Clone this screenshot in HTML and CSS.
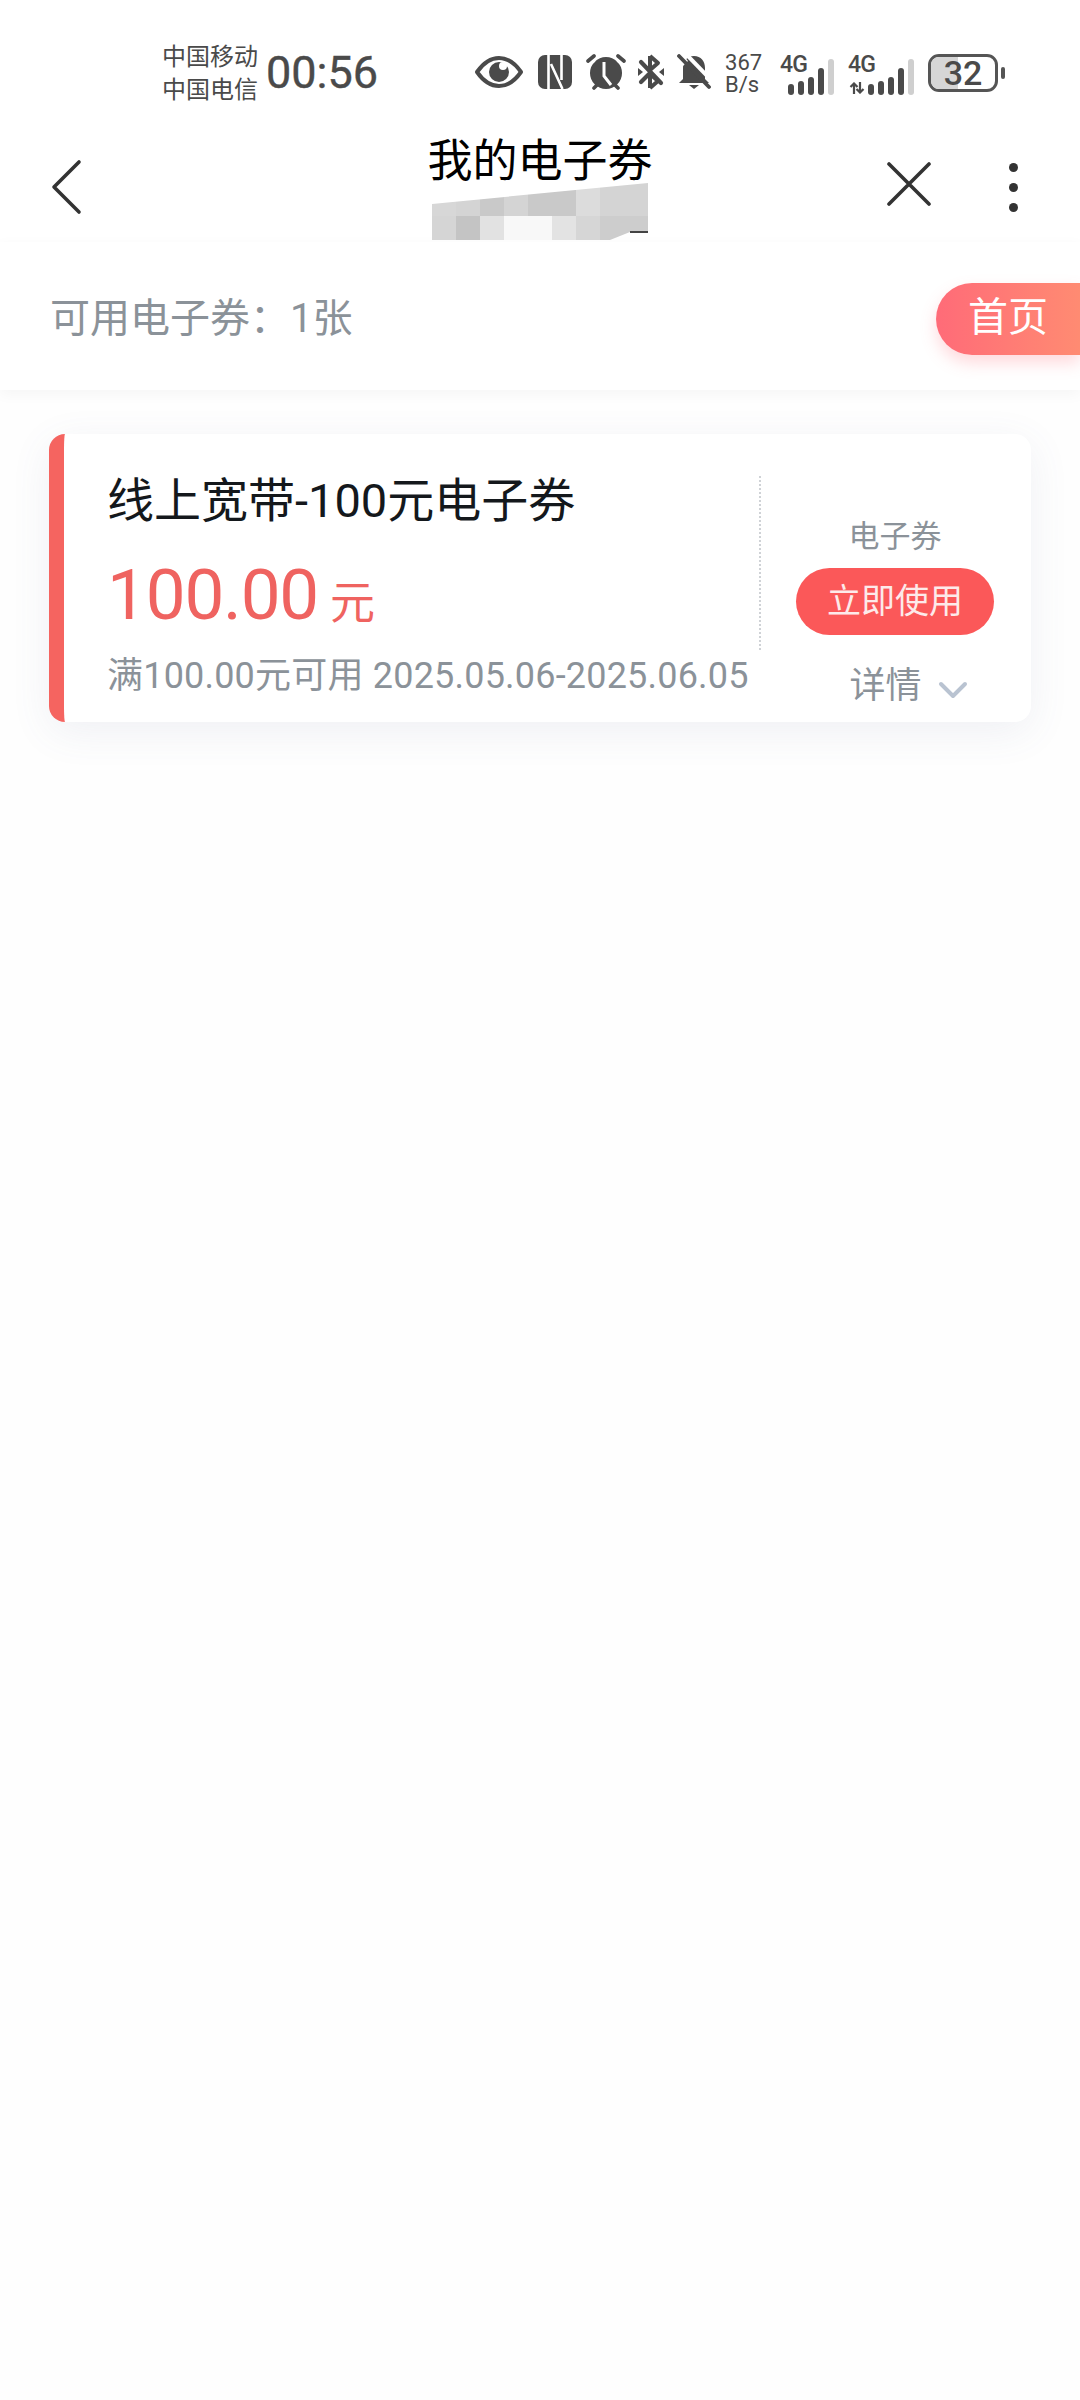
FILE: index.html
```html
<!DOCTYPE html>
<html lang="zh-CN">
<head>
<meta charset="UTF-8">
<title>我的电子券</title>
<link rel="stylesheet" href="styles.css">
</head>
<body>

<div class="statusbar">
    <div class="carriers"><div>中国移动</div><div>中国电信</div></div>
    <div class="clock">00:56</div>
    <div class="status_icons">
        <svg class="ic_eye" viewBox="0 0 48 34"><path d="M2 17C9 7 16 3 24 3s15 4 22 14c-7 10-14 14-22 14S9 27 2 17z" fill="none" stroke="#4a4a4a" stroke-width="4" stroke-linejoin="round"/><circle cx="24" cy="17" r="10" fill="#4a4a4a"/><circle cx="28" cy="11" r="4" fill="#fff"/></svg>
        <svg class="ic_nfc" viewBox="0 0 34 34"><rect width="34" height="34" rx="7" fill="#4a4a4a"/><path d="M10.500 0v34M23.500 0v25M13 9l11.500 25" fill="none" stroke="#fff" stroke-width="2.600"/></svg>
        <svg class="ic_alarm" viewBox="0 0 40 36"><circle cx="20" cy="19" r="16" fill="#4a4a4a"/><path d="M2 7l6-5M38 7l-6-5M8 34l3-3M32 34l-3-3" stroke="#4a4a4a" stroke-width="3.600" stroke-linecap="round"/><path d="M2 13l7-6M38 13l-7-6" stroke="#fff" stroke-width="1.500"/><path d="M18 8v14l7 9" fill="none" stroke="#fff" stroke-width="3"/></svg>
        <svg class="ic_bt" viewBox="0 0 28 36"><path d="M13 2v32M13 2l8 7-8 7M13 34l8-7-8-7" fill="none" stroke="#4a4a4a" stroke-width="4" stroke-linejoin="round"/><path d="M4 8l20 21M4 28l8-8" stroke="#4a4a4a" stroke-width="4.200" stroke-linecap="round"/><path d="M1 14l5 4-5 4zM27 14l-5 4 5 4z" fill="#4a4a4a"/></svg>
        <svg class="ic_bell" viewBox="0 0 34 36"><path d="M17 2c7 0 11 5 11 12v11l4 4H2l4-4V14C6 7 10 2 17 2z" fill="#4a4a4a"/><path d="M12 31h10l-5 4z" fill="#4a4a4a"/><path d="M7-2l31 32" stroke="#fff" stroke-width="4"/><path d="M0 0v8l5 5 6-6-6-7z" fill="#fff"/><path d="M2 2l30 31" stroke="#4a4a4a" stroke-width="3.800" stroke-linecap="round"/></svg>
        <div class="speed"><div>367</div><div>B/s</div></div>
        <div class="signal">
            <span class="net">4G</span>
            <div class="bars">
                <i class="b1"></i><i class="b2"></i><i class="b3"></i><i class="b4"></i><i class="b5"></i>
            </div>
        </div>
        <div class="signal">
            <span class="net">4G</span>
            <svg class="ic_updown" viewBox="0 0 16 12"><path d="M5 12V2M1.500 5L5 1.500 8.500 5M11 0v10M7.500 7l3.500 3.500L14.500 7" fill="none" stroke="#4a4a4a" stroke-width="2.200"/></svg>
            <div class="bars">
                <i class="b1"></i><i class="b2"></i><i class="b3"></i><i class="b4"></i><i class="b5"></i>
            </div>
        </div>
        <div class="battery">
            <div class="battery_body"><div class="battery_fill"></div><span>32</span></div>
            <div class="battery_tip"></div>
        </div>
    </div>
</div>

<div class="navbar">
    <svg class="ic_back" viewBox="0 0 34 56"><path d="M29 3L4 28l25 25" fill="none" stroke="#333" stroke-width="3.600" stroke-linecap="round" stroke-linejoin="round"/></svg>
    <div class="nav_title">
        <div class="title">我的电子券</div>
        <svg class="mosaic" viewBox="0 0 216 57">
            <clipPath id="mosaic_clip"><path d="M0 21L216 0V49H198L178 57H0z"/></clipPath>
            <g clip-path="url(#mosaic_clip)">
                <rect x="0" y="0" width="24" height="33" fill="#d7d7d7"/>
                <rect x="24" y="0" width="24" height="33" fill="#d4d4d4"/>
                <rect x="48" y="0" width="24" height="33" fill="#c9c9c9"/>
                <rect x="72" y="0" width="24" height="33" fill="#d4d4d4"/>
                <rect x="96" y="0" width="48" height="33" fill="#c9c9c9"/>
                <rect x="144" y="0" width="24" height="33" fill="#dcdcdc"/>
                <rect x="168" y="0" width="48" height="33" fill="#d4d4d4"/>
                <rect x="0" y="33" width="24" height="24" fill="#d5d5d5"/>
                <rect x="24" y="33" width="24" height="24" fill="#c4c4c4"/>
                <rect x="48" y="33" width="24" height="24" fill="#e2e2e2"/>
                <rect x="72" y="33" width="48" height="24" fill="#f8f8f8"/>
                <rect x="120" y="33" width="24" height="24" fill="#e3e3e3"/>
                <rect x="144" y="33" width="24" height="24" fill="#d6d6d6"/>
                <rect x="168" y="33" width="48" height="24" fill="#cdcdcd"/>
            </g>
            <rect x="198" y="48" width="18" height="2" fill="#444"/>
        </svg>
    </div>
    <div class="nav_right">
        <svg class="ic_close" viewBox="0 0 44 44"><path d="M2 2l40 40M42 2L2 42" stroke="#333" stroke-width="3.600" stroke-linecap="round"/></svg>
        <div class="dots"><i></i><i></i><i></i></div>
    </div>
</div>

<div class="summary">
    <div class="summary_text">可用电子券：1张</div>
    <div class="home_btn">首页</div>
</div>

<div class="coupon_list">
    <div class="coupon">
        <div class="coupon_main">
            <div class="coupon_name">线上宽带-100元电子券</div>
            <div class="coupon_amount"><span class="num">100.00</span><span class="unit">元</span></div>
            <div class="coupon_meta">满100.00元可用 2025.05.06-2025.06.05</div>
        </div>
        <div class="coupon_side">
            <div class="coupon_type">电子券</div>
            <div class="use_btn">立即使用</div>
            <div class="detail">详情
                <svg class="ic_down" viewBox="0 0 30 18"><path d="M3 3l12 12L27 3" fill="none" stroke="#b9c3d1" stroke-width="4" stroke-linecap="round" stroke-linejoin="round"/></svg>
            </div>
        </div>
    </div>
</div>

</body>
</html>
```
FILE: styles.css
```css
* {
    box-sizing: border-box;
}
body {
    margin: 0;
    width: 1080px;
    height: 2400px;
    overflow: hidden;
    background: #fefefe;
    font-family: Roboto, "Noto Sans CJK SC", sans-serif;
}

.statusbar {
    height: 118px;
    padding: 28px 0 0 162px;
    display: flex;
    align-items: flex-start;
    background: #fff;
    color: #4a4a4a;
}
.carriers {
    width: 104px;
    font-size: 24px;
    line-height: 33px;
    margin-top: 13px;
}
.clock {
    font-size: 45px;
    line-height: 58px;
    margin-top: 16px;
    -webkit-text-stroke: 0.4px #4a4a4a;
}
.status_icons {
    display: flex;
    align-items: center;
    margin: 22px 0 0 97px;
    height: 44px;
}
.status_icons svg {
    display: block;
}
.ic_eye { width: 48px; height: 34px; margin-right: 15px; }
.ic_nfc { width: 34px; height: 34px; margin-right: 14px; }
.ic_alarm { width: 40px; height: 36px; margin-right: 11px; }
.ic_bt { width: 28px; height: 36px; margin-right: 12px; }
.ic_bell { width: 34px; height: 36px; margin-right: 14px; }
.speed {
    width: 40px;
    font-size: 22px;
    line-height: 22px;
    padding-top: 3px;
    margin-right: 15px;
}
.signal {
    position: relative;
    height: 40px;
    display: flex;
    align-items: flex-end;
    justify-content: flex-end;
    margin-right: 14px;
    width: 54px;
    top: 3px;
}
.signal + .signal {
    width: 66px;
}
.net {
    position: absolute;
    left: 0;
    top: -2px;
    font-size: 23px;
    line-height: 24px;
    font-weight: 500;
    letter-spacing: -1px;
}
.status_icons .ic_updown {
    position: absolute;
    left: 1px;
    bottom: 1px;
    width: 16px;
    height: 12px;
}
.bars {
    display: flex;
    align-items: flex-end;
    gap: 4px;
}
.bars i {
    display: block;
    width: 6px;
    border-radius: 3px;
    background: #4a4a4a;
}
.bars .b1 { height: 11px; }
.bars .b2 { height: 14px; }
.bars .b3 { height: 18px; }
.bars .b4 { height: 27px; }
.bars .b5 { height: 36px; background: #cfcfcf; }
.battery {
    display: flex;
    align-items: center;
    gap: 3px;
    position: relative;
    top: 1px;
}
.battery_body {
    position: relative;
    width: 70px;
    height: 38px;
    border: 3px solid #555;
    border-radius: 11px;
    overflow: hidden;
    text-align: center;
    font-size: 34px;
    line-height: 32px;
    font-weight: 500;
    color: #4a4a4a;
}
.battery_fill {
    position: absolute;
    left: 0;
    top: 0;
    bottom: 0;
    width: 27px;
    background: #d6d6d6;
}
.battery_body span {
    position: relative;
}
.battery_tip {
    width: 4px;
    height: 12px;
    border-radius: 2px;
    background: #555;
}

.navbar {
    height: 124px;
    padding: 0 0 0 50px;
    display: flex;
    align-items: flex-start;
    background: #fff;
}
.ic_back {
    width: 34px;
    height: 56px;
    margin-top: 41px;
    flex: none;
}
.nav_title {
    width: 216px;
    margin-left: 348px;
    display: flex;
    flex-direction: column;
    align-items: center;
}
.title {
    font-size: 45px;
    line-height: 56px;
    margin-top: 16px;
    color: #000;
    white-space: nowrap;
}
.mosaic {
    display: block;
    width: 216px;
    height: 57px;
    margin-top: -7px;
    flex: none;
}
.nav_right {
    margin-left: 239px;
    display: flex;
    align-items: flex-start;
    margin-top: 44px;
}
.ic_close {
    width: 44px;
    height: 44px;
    display: block;
}
.dots {
    margin: 1px 0 0 78px;
    display: flex;
    flex-direction: column;
    gap: 11px;
}
.dots i {
    display: block;
    width: 9px;
    height: 9px;
    border-radius: 50%;
    background: #333;
}

.summary {
    height: 148px;
    padding: 41px 0 0 50px;
    display: flex;
    justify-content: space-between;
    align-items: flex-start;
    background: #fff;
    box-shadow: 0 4px 14px rgba(0, 0, 0, 0.04);
}
.summary_text {
    font-size: 40px;
    line-height: 72px;
    color: #8b9299;
}
.home_btn {
    width: 144px;
    height: 72px;
    padding-left: 32px;
    border-radius: 36px 0 0 36px;
    background: linear-gradient(90deg, #ff6b78, #ff8b72);
    box-shadow: 0 8px 16px rgba(255, 107, 120, 0.25);
    color: #fff;
    font-size: 40px;
    line-height: 70px;
}

.coupon_list {
    padding: 44px 49px 0;
}
.coupon {
    height: 288px;
    display: flex;
    background: #fff;
    border-left: 15px solid #f56460;
    border-radius: 16px;
    box-shadow: 0 10px 40px rgba(90, 100, 140, 0.09);
}
.coupon_main {
    width: 695px;
    padding: 37px 0 0 43px;
    white-space: nowrap;
}
.coupon_name {
    font-size: 47px;
    line-height: 60px;
    color: #14181c;
}
.coupon_amount {
    margin-top: 20px;
    line-height: 88px;
    color: #ef6360;
}
.coupon_amount .num {
    font-size: 71px;
    letter-spacing: -1.2px;
}
.coupon_amount .unit {
    font-size: 45px;
    margin-left: 12px;
}
.coupon_meta {
    margin-top: -6px;
    font-size: 36px;
    line-height: 48px;
    letter-spacing: 0.2px;
    color: #8b9299;
}
.coupon_side {
    flex: 1;
    position: relative;
    display: flex;
    flex-direction: column;
    align-items: center;
    padding-top: 84px;
}
.coupon_side::before {
    content: "";
    position: absolute;
    left: 0;
    top: 42px;
    height: 174px;
    border-left: 2px dotted #cfd2d6;
}
.coupon_type {
    font-size: 31px;
    line-height: 38px;
    color: #8b9299;
}
.use_btn {
    width: 198px;
    height: 67px;
    margin-top: 12px;
    border-radius: 34px;
    background: #fb5859;
    color: #fdeaea;
    text-align: center;
    font-size: 34px;
    line-height: 66px;
}
.detail {
    margin-top: 29px;
    margin-left: 27px;
    display: flex;
    align-items: center;
    gap: 16px;
    font-size: 36px;
    line-height: 44px;
    color: #8b9299;
}
.ic_down {
    width: 30px;
    height: 18px;
    margin-top: 8px;
}
```
